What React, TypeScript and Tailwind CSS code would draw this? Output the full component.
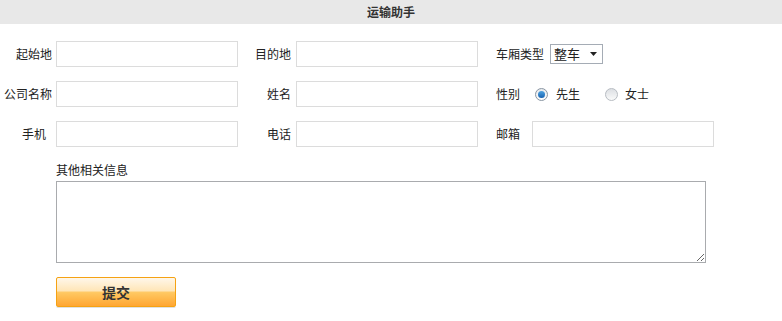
export default function App() {
  const font = { fontFamily: '"Noto Sans CJK SC", "Liberation Sans", sans-serif' };

  return (
    <div className="w-[782px] h-[321px] bg-white text-[12px] text-[#222] overflow-hidden" style={font}>
      <div className="h-[24px] bg-[#e8e8e8] flex items-center justify-center font-bold text-[12px] text-[#333]">
        运输助手
      </div>

      <div className="pt-[17px] flex flex-col gap-[14px]">
        <div className="flex items-center h-[26px]">
          <span className="w-[52px] text-right">起始地</span>
          <input className="ml-[4px] w-[182px] h-[26px] border border-[#dcdcdc] outline-none" />
          <span className="w-[53px] text-right">目的地</span>
          <input className="ml-[5px] w-[182px] h-[26px] border border-[#dcdcdc] outline-none" />
          <span className="ml-[18px] w-[54px]">车厢类型</span>
          <div className="flex items-center h-[20px] w-[53px] border border-[#a5acb5] px-[3px] text-[13px]">
            <span>整车</span>
            <svg className="ml-auto mr-[2px]" width="7" height="4" viewBox="0 0 7 4">
              <path d="M0 0h7L3.5 4z" fill="#222" />
            </svg>
          </div>
        </div>

        <div className="flex items-center h-[26px]">
          <span className="w-[52px] text-right">公司名称</span>
          <input className="ml-[4px] w-[182px] h-[26px] border border-[#dcdcdc] outline-none" />
          <span className="w-[53px] text-right">姓名</span>
          <input className="ml-[5px] w-[182px] h-[26px] border border-[#dcdcdc] outline-none" />
          <span className="ml-[18px] w-[39px]">性别</span>
          <span className="w-[13px] h-[13px] rounded-full border border-[#8a96a3] bg-gradient-to-b from-[#e6e9ec] to-[#fdfdfd] flex items-center justify-center">
            <span className="w-[7px] h-[7px] rounded-full bg-gradient-to-b from-[#4fa3e0] to-[#1662b0]" />
          </span>
          <span className="ml-[8px]">先生</span>
          <span className="ml-[25px] w-[13px] h-[13px] rounded-full border border-[#b7bcc2] bg-gradient-to-b from-[#dcdfe3] to-[#fafafa]" />
          <span className="ml-[7px]">女士</span>
        </div>

        <div className="flex items-center h-[26px]">
          <span className="w-[52px] text-right pr-[6px]">手机</span>
          <input className="ml-[4px] w-[182px] h-[26px] border border-[#dcdcdc] outline-none" />
          <span className="w-[53px] text-right">电话</span>
          <input className="ml-[5px] w-[182px] h-[26px] border border-[#dcdcdc] outline-none" />
          <span className="ml-[18px] w-[36px]">邮箱</span>
          <input className="w-[182px] h-[26px] border border-[#dcdcdc] outline-none" />
        </div>
      </div>

      <div className="ml-[56px] mt-[15px]">
        <div className="leading-[16px]">其他相关信息</div>
        <textarea className="block mt-[3px] w-[650px] h-[82px] border border-[#a9abae] outline-none resize" />
        <button
          className="mt-[14px] w-[120px] h-[30px] rounded-[2px] border border-[#f5a213] bg-[linear-gradient(#fff7ea,#ffe6b8_45%,#ffc862_52%,#ffa632)] shadow-[0_1px_0_#e0e0e0] font-bold text-[14px] text-[#333]"
          style={font}
        >
          提交
        </button>
      </div>
    </div>
  );
}
